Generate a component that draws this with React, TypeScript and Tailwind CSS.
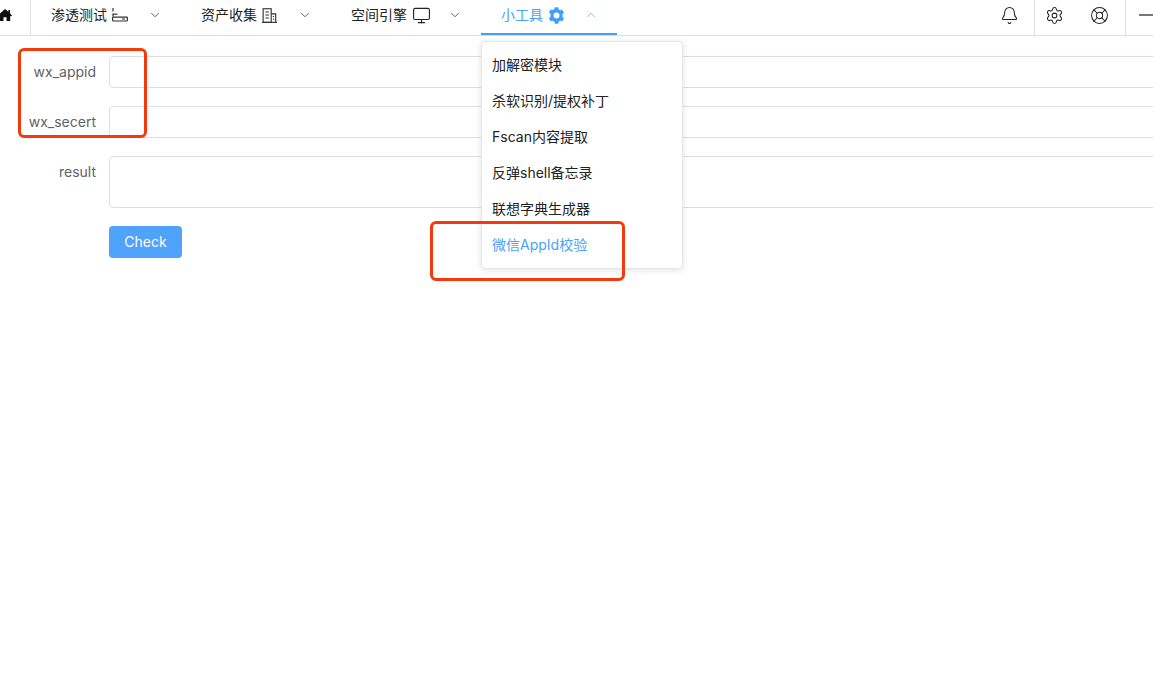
import { ChevronDown, ChevronUp, Bell, Settings, LifeBuoy, Monitor } from 'lucide-react';

const fontStack = "font-['Inter','Noto_Sans_CJK_SC',sans-serif]";

function RouterIcon() {
  return (
    <svg viewBox="0 0 16 14" className="w-4 h-[14px]" fill="none" stroke="#303133" strokeWidth="1.2">
      <path d="M1 0v3.5M1 5.5v3" />
      <path d="M1 6.2h4.5" />
      <rect x="0.6" y="9.2" width="14.8" height="3.8" rx="0.8" />
      <path d="M10 11h3" strokeWidth="1" />
    </svg>
  );
}

function BuildingIcon() {
  return (
    <svg viewBox="0 0 16 16" className="w-[15px] h-[15px]" fill="none" stroke="#303133" strokeWidth="1.2">
      <path d="M0 15.3h16" />
      <rect x="1.2" y="0.8" width="8.6" height="14.5" />
      <path d="M9.8 6.2h4.8v9.1" />
      <path d="M3.6 4.2h3.8M3.6 7.4h3.8M3.6 10.6h3.8M11.6 9h1.3M11.6 12h1.3" />
    </svg>
  );
}

function SolidGear() {
  return (
    <svg viewBox="0 0 16 16" className="w-[17px] h-[17px]" fill="#409eff">
      <path
        fillRule="evenodd"
        d="M6.4.3h3.2l.5 2 1.4.8 2-.6 1.6 2.8-1.5 1.4v2.6l1.5 1.4-1.6 2.8-2-.6-1.4.8-.5 2H6.4l-.5-2-1.4-.8-2 .6L.9 10.5l1.5-1.4V6.5L.9 5.1l1.6-2.8 2 .6 1.4-.8zM8 5.2a2.8 2.8 0 1 0 0 5.6 2.8 2.8 0 0 0 0-5.6z"
      />
    </svg>
  );
}

function HomeIcon() {
  return (
    <svg viewBox="0 0 14 14" className="w-[14px] h-[14px]" fill="#111">
      <path d="M7 1 0 7.4l1 1 .8-.7V13h3.7V9.2h3V13h3.7V7.7l.8.7 1-1L12 5.2V2h-1.6v1.7z" />
    </svg>
  );
}

function NavItem({ label, icon, active, wide }: { label: string; icon: React.ReactNode; active?: boolean; wide?: boolean }) {
  const Chevron = active ? ChevronUp : ChevronDown;
  return (
    <div
      className={`relative ${wide ? 'w-[150px]' : 'w-[136px]'} h-[35px] pb-[5px] flex items-center pl-5 text-sm ${
        active ? 'text-[#4a9ffa] shadow-[inset_0_-2px_0_#409eff]' : 'text-[#222]'
      }`}
    >
      <span>{label}</span>
      <span className="ml-[5px] flex items-center">{icon}</span>
      <Chevron
        className={`absolute ${wide ? 'left-[117px]' : 'left-[103px]'} top-2`}
        size={14}
        strokeWidth={1.2}
      />
    </div>
  );
}

function FormRow({ label, tall }: { label: string; tall?: boolean }) {
  return (
    <div className="flex mb-[18px]">
      <label className="w-[96px] shrink-0 text-right text-sm leading-[32px] text-[#606266]">{label}</label>
      <div
        className={`ml-[13px] w-[1100px] shrink-0 border border-[#dcdfe6] rounded ${tall ? 'h-[52px]' : 'h-8'}`}
      />
    </div>
  );
}

const menuItems = ['加解密模块', '杀软识别/提权补丁', 'Fscan内容提取', '反弹shell备忘录', '联想字典生成器', '微信AppId校验'];

export default function App() {
  return (
    <div className={`relative h-[688px] overflow-hidden bg-white ${fontStack}`}>
      {/* Top menu */}
      <div className="flex h-9 border-b border-[#dcdfe6]">
        <div className="w-[31px] h-[35px] pb-[5px] border-r border-[#dcdfe6] flex items-center">
          <span className="-ml-[2px]"><HomeIcon /></span>
        </div>
        <NavItem wide label="渗透测试" icon={<RouterIcon />} />
        <NavItem wide label="资产收集" icon={<BuildingIcon />} />
        <NavItem wide label="空间引擎" icon={<Monitor size={19} strokeWidth={1.4} />} />
        <NavItem label="小工具" icon={<SolidGear />} active />
        <div className="flex-1" />
        <div className="w-[50px] h-[35px] pb-[5px] flex items-center justify-center text-[#222]">
          <Bell size={19} strokeWidth={1.3} />
        </div>
        <div className="w-[92px] h-[35px] pb-[5px] border-x border-[#dcdfe6] flex items-center text-[#222]">
          <span className="ml-[10px]"><Settings size={19} strokeWidth={1.3} /></span>
          <span className="ml-[26px]"><LifeBuoy size={19} strokeWidth={1.3} /></span>
        </div>
        <div className="w-[27px] h-[35px] pb-[5px] flex items-center justify-end">
          <div className="w-[14px] h-[2px] bg-[#777]" />
        </div>
      </div>

      {/* Form */}
      <div className="pt-5">
        <FormRow label="wx_appid" />
        <FormRow label="wx_secert" />
        <FormRow label="result" tall />
        <div className="pl-[109px]">
          <button className="w-[73px] h-8 bg-[#4fa3fb] text-white text-sm rounded">Check</button>
        </div>
      </div>

      {/* Dropdown */}
      <div className="absolute left-[481px] top-[41px] w-[202px] py-[5px] bg-white border border-[#e4e7ed] rounded shadow-[0_1px_6px_rgba(0,0,0,0.12)]">
        {menuItems.map((item, i) => (
          <div
            key={item}
            className={`h-9 px-[10px] flex items-center text-sm ${i === 5 ? 'text-[#4a9ffa]' : 'text-[#222]'}`}
          >
            {item}
          </div>
        ))}
      </div>

      {/* Annotation boxes */}
      <div className="absolute left-[18px] top-[48px] w-[129px] h-[90px] border-[3px] border-[#f33a0c] rounded-md" />
      <div className="absolute left-[430px] top-[221px] w-[195px] h-[60px] border-[3px] border-[#f33a0c] rounded-md" />
    </div>
  );
}
